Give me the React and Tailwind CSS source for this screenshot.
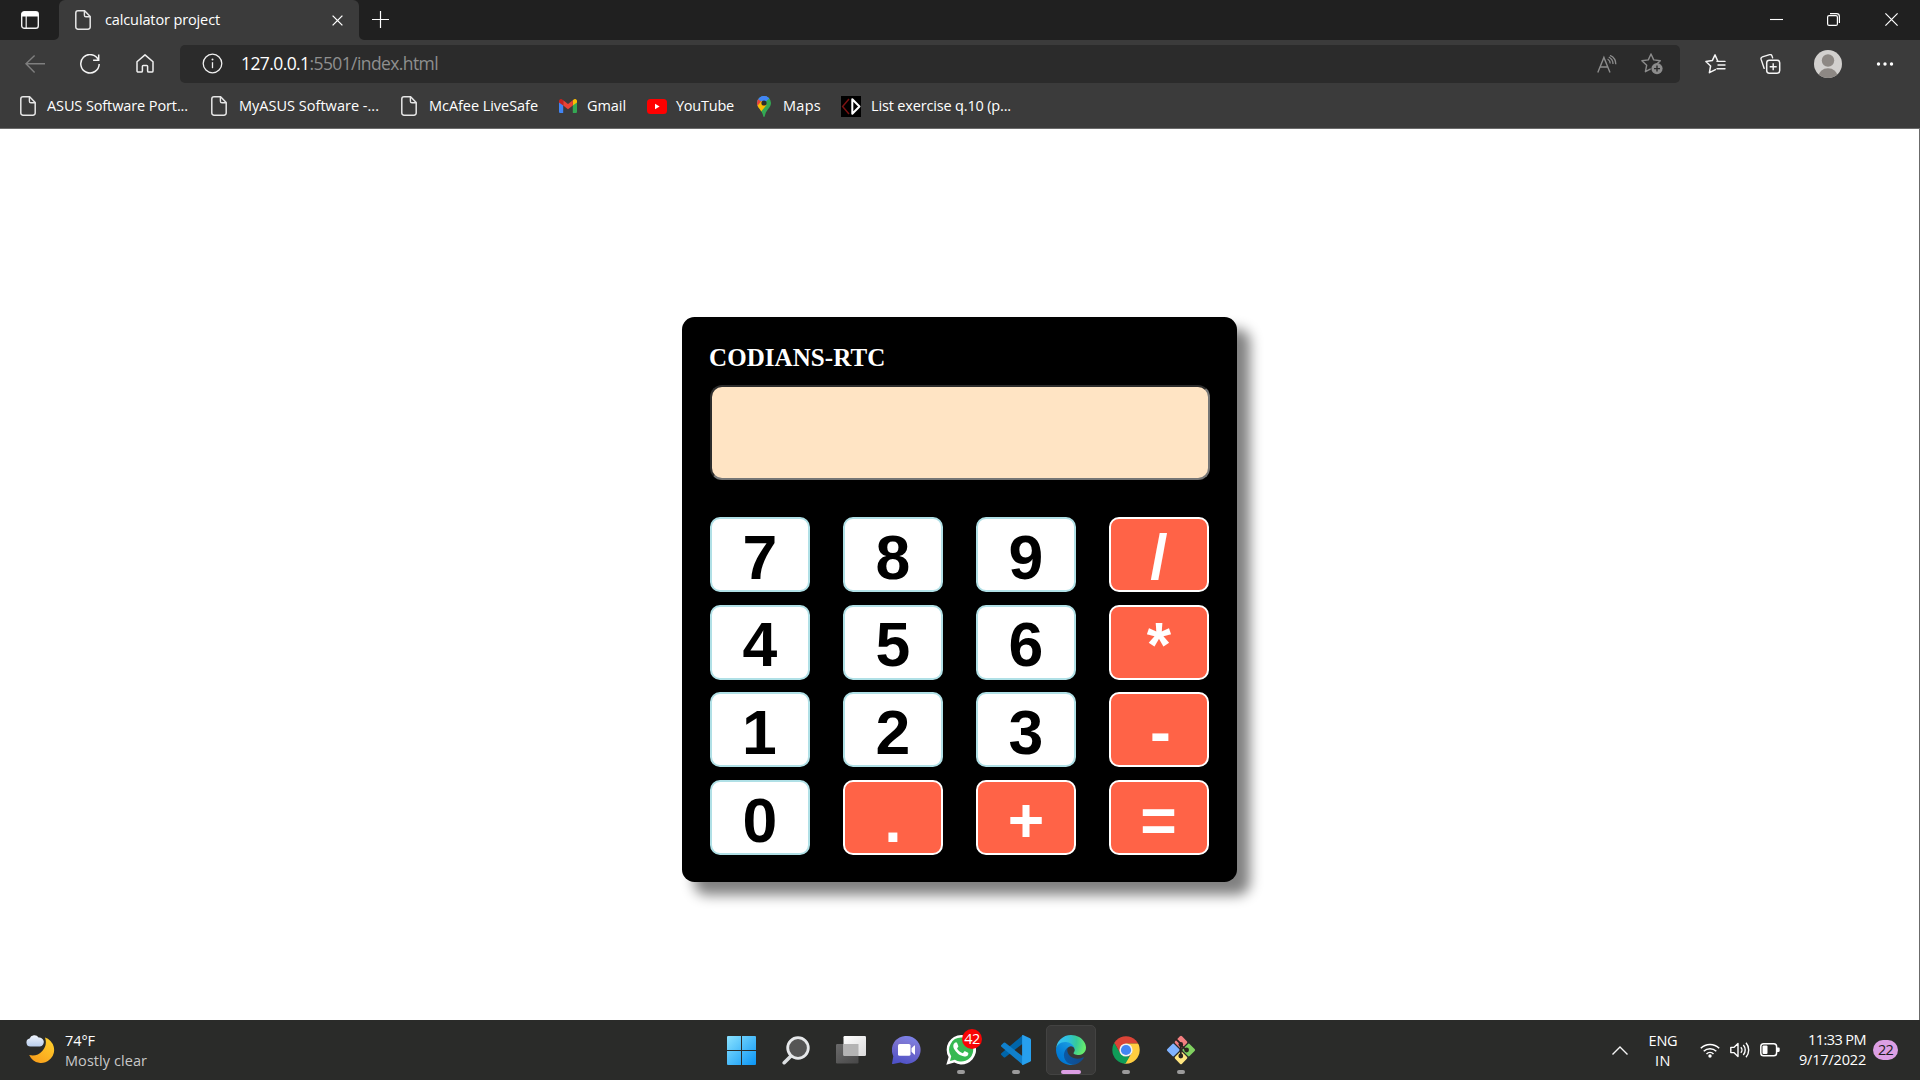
import { useLayoutEffect, useRef } from "react";

const UI = "font-['Open_Sans','Noto_Sans',sans-serif]";

/* Single line of text whose tracking is adjusted so it fills exactly `w` pixels. */
function Fit({ w, className = "", children }) {
  const ref = useRef(null);
  useLayoutEffect(() => {
    const el = ref.current;
    el.style.letterSpacing = "0px";
    const natural = el.getBoundingClientRect().width;
    const count = el.textContent.length;
    el.style.letterSpacing = `${(w - natural) / count}px`;
  }, [w]);
  return (
    <span ref={ref} className={`inline-block shrink-0 whitespace-pre ${className}`}>
      {children}
    </span>
  );
}

function Icon({ w, h, className = "", children }) {
  return (
    <svg
      width={w}
      height={h}
      viewBox={`0 0 ${w} ${h}`}
      fill="none"
      className={`block shrink-0 ${className}`}
    >
      {children}
    </svg>
  );
}

function PageIcon({ className = "" }) {
  return (
    <Icon w={16} h={20} className={className}>
      <path
        d="M3 .8h6.6L15.2 6.6V17a2.2 2.2 0 0 1-2.2 2.2H3A2.2 2.2 0 0 1 .8 17V3A2.2 2.2 0 0 1 3 .8Z"
        stroke="#e6e6e6"
        strokeWidth="1.5"
      />
      <path d="M9.4 1v4.2c0 .9.6 1.6 1.6 1.6h4" stroke="#e6e6e6" strokeWidth="1.4" />
    </Icon>
  );
}

function TitleBar() {
  return (
    <div className="flex h-10 bg-[#202020]">
      <div className="flex w-[59px] items-center pl-[21px]">
        <Icon w={18} h={18}>
          <rect x=".7" y=".7" width="16.6" height="16.6" rx="2.6" stroke="#f2f2f2" strokeWidth="1.4" />
          <path d="M.7 5.6V3.3A2.6 2.6 0 0 1 3.3.7h11.4a2.6 2.6 0 0 1 2.6 2.6v2.3Z" fill="#fff" />
          <path d="M5.2 5v12.3" stroke="#f2f2f2" strokeWidth="1.2" />
        </Icon>
      </div>
      <div className="relative flex w-[300px] items-center rounded-t-[6px] bg-[#3b3b3b] pl-4">
        <Icon w={5} h={5} className="absolute -left-[5px] bottom-0">
          <path d="M5 0v5H0a5 5 0 0 0 5-5Z" fill="#3b3b3b" />
        </Icon>
        <Icon w={5} h={5} className="absolute -right-[5px] bottom-0">
          <path d="M0 0v5h5a5 5 0 0 1-5-5Z" fill="#3b3b3b" />
        </Icon>
        <PageIcon />
        <Fit w={115} className="ml-[14px] text-[14.5px] leading-5 text-white">
          calculator project
        </Fit>
        <Icon w={11} h={11} className="absolute right-[16px] top-[15px]">
          <path d="M.6.6l9.8 9.8M10.4.6L.6 10.4" stroke="#fff" strokeWidth="1.3" />
        </Icon>
      </div>
      <Icon w={17} h={17} className="ml-[13px] mt-[11px]">
        <path d="M8.5 0v17M0 8.5h17" stroke="#fff" strokeWidth="1.2" />
      </Icon>
      <div className="ml-auto flex pr-[22px] pt-[13px]">
        <Icon w={13} h={13}>
          <path d="M0 6.5h13" stroke="#fff" strokeWidth="1.1" />
        </Icon>
        <Icon w={13} h={13} className="ml-11">
          <rect x=".6" y="2.6" width="9.8" height="9.8" rx="1.5" stroke="#fff" strokeWidth="1.2" />
          <path d="M3 .6h6.6a2.8 2.8 0 0 1 2.8 2.8V10" stroke="#fff" strokeWidth="1.2" />
        </Icon>
        <Icon w={13} h={13} className="ml-[45px]">
          <path d="M.4.4l12.2 12.2M12.6.4L.4 12.6" stroke="#fff" strokeWidth="1.2" />
        </Icon>
      </div>
    </div>
  );
}

function ToolBar() {
  return (
    <div className="flex h-[48px] items-center bg-[#3b3b3b] pb-px">
      <Icon w={20} h={18} className="ml-[25px]">
        <path d="M20 8.8H1M9.6.6L1 8.8l8.6 8.6" stroke="#7f7f7f" strokeWidth="1.4" />
      </Icon>
      <Icon w={20} h={20} className="ml-[35px]">
        <path d="M18.4 6A9.2 9.2 0 1 0 19.2 10" stroke="#f5f5f5" strokeWidth="1.5" />
        <path d="M18.7.6v5.6h-5.6" stroke="#f5f5f5" strokeWidth="1.5" />
      </Icon>
      <Icon w={18} h={19} className="ml-9">
        <path
          d="M1 7.8 9 .9l8 6.900v9.100a1.200 1.200 0 0 1-1.200 1.200h-3a1.200 1.200 0 0 1-1.200-1.200v-4.600a.9.900 0 0 0-.9-.9H7.300a.9.900 0 0 0-.9.900v4.600a1.200 1.200 0 0 1-1.200 1.200h-3A1.200 1.200 0 0 1 1 16.900Z"
          stroke="#f0f0f0"
          strokeWidth="1.5"
          strokeLinejoin="round"
        />
      </Icon>
      <div className="ml-[26px] flex h-[38px] w-[1500px] items-center rounded-[5px] bg-[#2b2b2b] pl-[22px]">
        <Icon w={21} h={21}>
          <circle cx="10.5" cy="10.5" r="9.3" stroke="#f0f0f0" strokeWidth="1.3" />
          <path d="M10.5 9.2v6" stroke="#f0f0f0" strokeWidth="1.3" />
          <circle cx="10.5" cy="6.4" r="1" fill="#f0f0f0" />
        </Icon>
        <Fit w={197} className="mb-px ml-[18px] text-[17.5px] leading-6 text-[#8f8f8f]">
          <span className="text-white">127.0.0.1</span>:5501/index.html
        </Fit>
        <Icon w={20} h={18} className="ml-auto">
          <path d="M.8 17.4 6.9 2.4l6.1 15M3.2 12h7.6" stroke="#8c8c8c" strokeWidth="1.4" />
          <path d="M10.6 4a5.500 5.500 0 0 1 2.600 4.600" stroke="#8c8c8c" strokeWidth="1.2" />
          <path d="M11.8 2a8 8 0 0 1 4.200 7" stroke="#8c8c8c" strokeWidth="1.3" />
          <path d="M13 .4a9.500 9.500 0 0 1 5.800 8.800" stroke="#8c8c8c" strokeWidth="1.3" />
        </Icon>
        <Icon w={22} h={22} className="ml-6 mr-[17px]">
          <path
            d="m10 1 2.7 5.9 6.6.8-3 2.8M10 1 7.3 6.900.9 7.700l4.800 4.500-1.300 6.500 4.800-2.600"
            stroke="#8c8c8c"
            strokeWidth="1.4"
            strokeLinejoin="round"
            strokeLinecap="round"
          />
          <circle cx="16" cy="15.6" r="5.6" fill="#8c8c8c" />
          <path d="M16 12.6v6M13 15.6h6" stroke="#2b2b2b" strokeWidth="1.4" />
        </Icon>
      </div>
      <Icon w={21} h={20} className="ml-[25px]">
        <path
          d="M12.6 6.800 10 .9 7.300 6.600.9 7.500l4.700 4.500-1.200 6.700 6-3.100"
          stroke="#f5f5f5"
          strokeWidth="1.5"
          strokeLinejoin="round"
          strokeLinecap="round"
        />
        <path d="M12 7.4h8M13 11h7M12 14.8h8" stroke="#f5f5f5" strokeWidth="1.4" strokeLinecap="round" />
      </Icon>
      <Icon w={21} h={20} className="ml-[34px]">
        <path
          d="M4.200 14.400 1.100 5.400a2 2 0 0 1 1.300-2.500L9.600.7a2 2 0 0 1 2.400 1.200l.6 2"
          stroke="#f5f5f5"
          strokeWidth="1.4"
          strokeLinecap="round"
        />
        <rect x="6.7" y="6.2" width="13" height="13" rx="2.6" stroke="#f5f5f5" strokeWidth="1.5" />
        <path d="M13.2 9.2v7M9.7 12.7h7" stroke="#f5f5f5" strokeWidth="1.4" />
      </Icon>
      <Icon w={28} h={28} className="ml-[33px]">
        <clipPath id="avatar">
          <circle cx="14" cy="14" r="14" />
        </clipPath>
        <g clipPath="url(#avatar)">
          <rect width="28" height="28" fill="#d2d0ce" />
          <circle cx="14" cy="10.5" r="6.2" fill="#8d8884" />
          <ellipse cx="14" cy="26.5" rx="9.6" ry="8.3" fill="#8d8884" />
        </g>
      </Icon>
      <Icon w={18} h={4} className="ml-[34px]">
        <circle cx="2.5" cy="2" r="1.7" fill="#fff" />
        <circle cx="9" cy="2" r="1.7" fill="#fff" />
        <circle cx="15.5" cy="2" r="1.7" fill="#fff" />
      </Icon>
    </div>
  );
}

function GmailIcon() {
  return (
    <Icon w={18} h={14}>
      <path d="M0 2v10.700c0 .7.600 1.300 1.300 1.300h2.900V5.200Z" fill="#4285f4" />
      <path d="M18 2v10.700c0 .7-.6 1.300-1.300 1.300h-2.900V5.200Z" fill="#34a853" />
      <path d="M13.800 1.300v5.300L18 3.500V2c0-1.700-1.900-2.600-3.200-1.600Z" fill="#fbbc04" />
      <path d="M4.200 6.600V1.300L9 4.900l4.800-3.600v5.300L9 10.200Z" fill="#ea4335" />
      <path d="M0 2v1.500l4.200 3.100V1.300L3.200.400C1.900-.6 0 .3 0 2Z" fill="#c5221f" />
    </Icon>
  );
}

function YouTubeIcon() {
  return (
    <Icon w={20} h={15}>
      <rect width="20" height="15" rx="3.5" fill="#f00" />
      <path d="M8 4.800v5.400l4.600-2.700Z" fill="#fff" />
    </Icon>
  );
}

function MapsIcon() {
  return (
    <Icon w={14} h={21}>
      <clipPath id="pin">
        <path d="M7 0a7 7 0 0 1 7 7c0 4.600-4.300 6.600-5.700 11.200C7.900 19.600 7.700 21 7 21s-.9-1.400-1.300-2.800C4.300 13.600 0 11.600 0 7a7 7 0 0 1 7-7Z" />
      </clipPath>
      <g clipPath="url(#pin)">
        <rect width="14" height="21" fill="#34a853" />
        <path d="M0 12 7 7l7-6V0H0Z" fill="#4285f4" />
        <path d="M0 2.200 7 8-2 15Z" fill="#ea4335" />
        <path d="M-1 11.500 5 4.500 9.500 9 3 17Z" fill="#fbbc04" />
        <path d="M2 2 7 7l5-6-5-2Z" fill="#4285f4" />
      </g>
      <circle cx="7" cy="7" r="2.6" fill="#2c2c2c" />
    </Icon>
  );
}

function CodeIcon() {
  return (
    <Icon w={20} h={21}>
      <rect width="20" height="21" fill="#000" />
      <path d="M8 3 1.600 10.500 8 18" stroke="#7a1212" strokeWidth="1.5" />
      <path d="M11.300 3.200v14.600l7.200-7.300Z" stroke="#fff" strokeWidth="2" strokeLinejoin="round" />
    </Icon>
  );
}

function Bookmark({ icon, label, w, gap, className }) {
  return (
    <div className={`flex items-center ${gap} ${className}`}>
      {icon}
      <Fit w={w} className="text-[14.5px] leading-5 text-white">
        {label}
      </Fit>
    </div>
  );
}

function BookmarkBar() {
  return (
    <div className="flex h-[41px] items-center border-b border-[#6b6b6b] bg-[#3b3b3b] pb-[4px]">
      <Bookmark className="ml-5" gap="gap-[11px]" icon={<PageIcon />} label="ASUS Software Port..." w={141} />
      <Bookmark className="ml-[23px]" gap="gap-3" icon={<PageIcon />} label="MyASUS Software -..." w={140} />
      <Bookmark className="ml-[22px]" gap="gap-3" icon={<PageIcon />} label="McAfee LiveSafe" w={109} />
      <Bookmark className="ml-[21px]" gap="gap-[10px]" icon={<GmailIcon />} label="Gmail" w={39} />
      <Bookmark className="ml-[21px]" gap="gap-[9px]" icon={<YouTubeIcon />} label="YouTube" w={58} />
      <Bookmark className="ml-[23px]" gap="gap-3" icon={<MapsIcon />} label="Maps" w={38} />
      <Bookmark className="ml-5" gap="gap-[10px]" icon={<CodeIcon />} label="List exercise q.10 (p..." w={140} />
    </div>
  );
}

const KEYS = ["7", "8", "9", "/", "4", "5", "6", "*", "1", "2", "3", "-", "0", ".", "+", "="];

function Key({ label }) {
  const tone = /\d/.test(label)
    ? "border-[#b0e0e6] bg-white text-black"
    : "border-white bg-[#ff6347] text-white";
  const nudge = label === "-" ? "pl-[3px]" : /[1=]/.test(label) ? "pr-px" : "";
  return (
    <button
      type="button"
      className={`flex h-[75px] w-[100px] items-center justify-center rounded-[10px] border-2 pt-[5px] font-['Liberation_Sans',Arial,sans-serif] text-[62.5px] font-bold leading-none ${tone} ${nudge}`}
    >
      {label}
    </button>
  );
}

function Calculator() {
  return (
    <div className="mt-[188px] h-[565px] w-[555px] rounded-[12.5px] bg-black px-[28px] pt-[26px] shadow-[12.5px_12.5px_12.5px_gray]">
      <h1 className="-ml-px font-['Liberation_Serif','Times_New_Roman',serif] text-[25px] font-bold leading-[29px] tracking-[0.08px] text-white">
        CODIANS-RTC
      </h1>
      <div className="mt-[13px] h-[95px] w-[500px] rounded-[12px] border-2 border-b-[#767676] border-l-[#2c2c2c] border-r-[#767676] border-t-[#2c2c2c] bg-[#ffe4c4]" />
      <div className="mt-[37px] grid grid-cols-[repeat(4,100px)] gap-x-[33px] gap-y-[12.66px]">
        {KEYS.map((k) => (
          <Key key={k} label={k} />
        ))}
      </div>
    </div>
  );
}

function WindowsIcon() {
  return (
    <Icon w={29} h={29}>
      <linearGradient id="win" x1="0" y1="0" x2="1" y2="1" gradientUnits="objectBoundingBox">
        <stop offset="0" stopColor="#8be3ff" />
        <stop offset="1" stopColor="#0a95f5" />
      </linearGradient>
      <path
        d="M1 0h13v14H0V1a1 1 0 0 1 1-1ZM15 0h13a1 1 0 0 1 1 1v13H15ZM0 15h14v14H1a1 1 0 0 1-1-1ZM15 15h14v13a1 1 0 0 1-1 1H15Z"
        fill="url(#win)"
      />
    </Icon>
  );
}

function SearchIcon() {
  return (
    <Icon w={28} h={29}>
      <path d="M9.500 19.500 2.200 26.700" stroke="#dcdfe1" strokeWidth="3.6" strokeLinecap="round" />
      <circle cx="16" cy="12" r="10.3" fill="#555" stroke="#e6e8ea" strokeWidth="2.8" />
    </Icon>
  );
}

function TaskViewIcon() {
  return (
    <Icon w={30} h={28}>
      <linearGradient id="tvFront" x1="0" y1="0" x2="1" y2="1">
        <stop offset="0" stopColor="#fff" />
        <stop offset="1" stopColor="#dadada" />
      </linearGradient>
      <linearGradient id="tvBack" x1="0" y1="0" x2="1" y2="1">
        <stop offset="0" stopColor="#6a6a6a" />
        <stop offset="1" stopColor="#474747" />
      </linearGradient>
      <rect y="8" width="22.5" height="19.5" rx="1.2" fill="url(#tvBack)" />
      <rect x="7.5" width="22.5" height="20" rx="1.2" fill="url(#tvFront)" />
      <path d="M7.500 8h15v12h-14a1 1 0 0 1-1-1Z" fill="#b4b4b4" />
    </Icon>
  );
}

function ChatIcon() {
  return (
    <Icon w={29} h={28}>
      <linearGradient id="chat" x1=".7" y1="0" x2=".4" y2="1">
        <stop offset="0" stopColor="#7b83eb" />
        <stop offset=".35" stopColor="#7a72cf" />
        <stop offset="1" stopColor="#4f52c8" />
      </linearGradient>
      <path d="M14.500 0a14 14 0 1 1-6 26.600L1 28a.8.8 0 0 1-.9-1l1.200-6.800A14 14 0 0 1 14.500 0Z" fill="url(#chat)" />
      <rect x="6" y="8" width="12.5" height="11.8" rx="1.6" fill="#fff" />
      <path d="m19.500 12.200 2.800-2.700a.4.400 0 0 1 .7.300v8.400a.4.400 0 0 1-.7.300l-2.800-2.700Z" fill="#fff" />
    </Icon>
  );
}

function WhatsAppIcon() {
  return (
    <Icon w={30} h={30}>
      <path
        d="M15.300 0A14.700 14.700 0 0 0 2.600 22L.3 29.800l8-2.200A14.700 14.700 0 1 0 15.300 0Z"
        fill="#fff"
      />
      <path
        d="M15.300 2.600A12 12 0 0 0 5.200 21.300L4 26.100l4.900-1.300A12 12 0 1 0 15.300 2.600Z"
        fill="#36b952"
      />
      <path
        d="M11.200 8.200c-.3-.6-.5-.6-.9-.6h-.7c-.3 0-.7.100-1 .5-.5.500-1.300 1.300-1.300 3.100s1.300 3.600 1.500 3.800c.2.300 2.600 4.100 6.400 5.600 3.100 1.200 3.800 1 4.400.9.700-.1 2.200-.9 2.500-1.800.3-.8.300-1.600.2-1.700-.1-.2-.3-.3-.7-.500l-2.500-1.200c-.4-.1-.6-.2-.9.200l-1.100 1.500c-.2.200-.4.300-.8.100-.4-.2-1.600-.6-3-1.800-1.100-1-1.900-2.200-2.100-2.600-.2-.4 0-.6.200-.8l.5-.6c.2-.2.200-.4.400-.6.100-.2 0-.4 0-.6Z"
        fill="#fff"
      />
    </Icon>
  );
}

function VSCodeIcon() {
  return (
    <Icon w={30} h={30}>
      <path d="M22 0v8.400L4.300 22.200a1.300 1.300 0 0 1-1.600 0L.4 20.100a1.200 1.200 0 0 1 0-1.800Z" fill="#0065a9" />
      <path d="M22 30v-8.400L4.300 7.800a1.300 1.300 0 0 0-1.600 0L.4 9.900a1.200 1.200 0 0 0 0 1.800Z" fill="#1080cc" />
      <path d="M22 0l7 3.200c.6.300 1 .9 1 1.600v20.400c0 .7-.4 1.300-1 1.600L22 30c-.6.200-.9-.2-.9-.7V.7c0-.5.300-.9.900-.7Z" fill="#27a0ee" />
    </Icon>
  );
}

function EdgeIcon() {
  return (
    <svg width="30" height="30" viewBox="0 0 256 256" className="block shrink-0">
      <defs>
        <linearGradient id="edgeA" x1="63" y1="177" x2="241" y2="177" gradientUnits="userSpaceOnUse">
          <stop offset="0" stopColor="#0c59a4" />
          <stop offset="1" stopColor="#114a8b" />
        </linearGradient>
        <linearGradient id="edgeB" x1="157" y1="100" x2="46" y2="220" gradientUnits="userSpaceOnUse">
          <stop offset="0" stopColor="#1b9de2" />
          <stop offset=".16" stopColor="#1595df" />
          <stop offset=".67" stopColor="#0680d7" />
          <stop offset="1" stopColor="#0078d4" />
        </linearGradient>
        <radialGradient id="edgeC" cx="26" cy="46" r="250" gradientUnits="userSpaceOnUse">
          <stop offset="0" stopColor="#35c1f1" />
          <stop offset=".3" stopColor="#2fc0e0" />
          <stop offset=".6" stopColor="#36c99a" />
          <stop offset=".9" stopColor="#66eb6e" />
        </radialGradient>
      </defs>
      <path
        d="M231 190.500c-3.400 1.800-6.900 3.400-10.500 4.700a101.800 101.800 0 0 1-35.900 6.400c-47.300 0-88.500-32.500-88.500-74.300 0-11.400 6.400-21.900 16.400-27.300-42.800 1.800-53.800 46.400-53.800 72.500 0 74 68.100 81.400 82.800 81.400 7.900 0 19.800-2.300 27-4.600l1.300-.4a128.300 128.300 0 0 0 66.600-52.800 4 4 0 0 0-5.400-5.600Z"
        fill="url(#edgeA)"
      />
      <path
        d="M105.700 241.400A79.200 79.200 0 0 1 83 220.100a80.700 80.700 0 0 1 29.500-120c3.200-1.500 8.500-4.100 15.600-4a32.400 32.400 0 0 1 25.700 13 31.900 31.900 0 0 1 6.300 18.700c0-.2 24.500-79.600-80-79.600-43.900 0-80 41.700-80 78.200a130.200 130.200 0 0 0 12.100 56 128 128 0 0 0 156.400 67.100 75.500 75.500 0 0 1-62.900-8.100Z"
        fill="url(#edgeB)"
      />
      <path
        d="M152.300 148.900c-.8 1-3.300 2.500-3.300 5.700 0 2.600 1.700 5.100 4.700 7.200 14.400 10 41.500 8.700 41.600 8.700 10.700 0 21.100-2.900 30.300-8.300A61.400 61.400 0 0 0 256 109.200c.3-22.400-8-37.300-11.300-43.900C223.500 23.900 177.700 0 128 0A128 128 0 0 0 0 126.200c.5-36.500 36.800-66 80-66 3.500 0 23.500.3 42 10.100 16.300 8.600 24.900 18.900 30.800 29.200 6.200 10.700 7.300 24.100 7.300 29.500 0 5.300-2.700 13.300-7.800 19.900Z"
        fill="url(#edgeC)"
      />
    </svg>
  );
}

function ChromeIcon() {
  return (
    <Icon w={28} h={28}>
      <clipPath id="chrome">
        <circle cx="14" cy="14" r="13.7" />
      </clipPath>
      <g clipPath="url(#chrome)">
        <path d="M14 14 2 7V0h26v7.500H14Z" fill="#db4437" />
        <path d="M14 7.500H28V28H12l7.700-10.800Z" fill="#ffcd40" />
        <path d="M2.200 6.500 8.300 17.300 14 20.500h3.600L13.300 28H0V8Z" fill="#0f9d58" />
        <path d="M2.200 6.500 14 7.500v7L8.300 17.300Z" fill="#db4437" />
      </g>
      <circle cx="14" cy="14" r="6.6" fill="#f1f1f1" />
      <circle cx="14" cy="14" r="5.1" fill="#4285f4" />
    </Icon>
  );
}

function GitIcon() {
  return (
    <Icon w={30} h={30}>
      <g transform="rotate(45 15 15)">
        <rect x="4.6" y="4.6" width="9.8" height="9.8" rx="1.5" fill="#f37f80" />
        <rect x="15.6" y="4.6" width="9.8" height="9.8" rx="1.5" fill="#80d060" />
        <rect x="4.6" y="15.6" width="9.8" height="9.8" rx="1.5" fill="#80b3ff" />
        <rect x="15.6" y="15.6" width="9.8" height="9.8" rx="1.5" fill="#ffe680" />
      </g>
      <path d="m9.800 3.800 5 5v12.700M14.800 9.800l5 5" stroke="#2c2320" strokeWidth="1.8" />
      <circle cx="14.8" cy="9.4" r="2.3" fill="#2c2320" />
      <circle cx="14.8" cy="21" r="2.4" fill="#2c2320" />
      <circle cx="20.6" cy="15" r="2.4" fill="#2c2320" />
    </Icon>
  );
}

const APPS = [
  { id: "start", icon: <WindowsIcon /> },
  { id: "search", icon: <SearchIcon /> },
  { id: "tasks", icon: <TaskViewIcon /> },
  { id: "chat", icon: <ChatIcon /> },
  { id: "whatsapp", icon: <WhatsAppIcon />, running: true, badge: "42" },
  { id: "vscode", icon: <VSCodeIcon />, running: true },
  { id: "edge", icon: <EdgeIcon />, active: true },
  { id: "chrome", icon: <ChromeIcon />, running: true },
  { id: "git", icon: <GitIcon />, running: true },
];

function TaskApp({ icon, running, active, badge }) {
  return (
    <div
      className={`relative flex h-[50px] w-[50px] items-center justify-center rounded-[5px] ${
        active ? "border border-[#434342] bg-[#383837]" : ""
      }`}
    >
      {icon}
      {running && <span className="absolute bottom-px left-[21px] h-1 w-2 rounded-full bg-[#9b9b9b]" />}
      {active && <span className="absolute bottom-0 left-[14px] h-1 w-5 rounded-full bg-[#dc9fe4]" />}
      {badge && (
        <span className="absolute left-[26px] top-[4px] flex h-5 w-5 items-center justify-center rounded-full bg-[#f80505] text-[14.5px] leading-none tracking-[-0.5px] text-white">
          {badge}
        </span>
      )}
    </div>
  );
}

function Taskbar() {
  return (
    <div className="flex h-[60px] items-center bg-[#2a2b29]">
      <div className="flex w-[714px] items-center pl-[25px]">
        <Icon w={30} h={30}>
          <linearGradient id="moon" x1="1" y1="0" x2=".3" y2="1">
            <stop offset="0" stopColor="#ffd42e" />
            <stop offset="1" stopColor="#f9a01b" />
          </linearGradient>
          <linearGradient id="cloud" x1="0" y1="0" x2="0" y2="1">
            <stop offset="0" stopColor="#f0f5fd" />
            <stop offset="1" stopColor="#b9cdec" />
          </linearGradient>
          <path d="M20 2.500a13 13 0 1 1-15.800 17.600A13.500 13.500 0 0 0 20 2.500Z" fill="url(#moon)" />
          <path d="M5.400 11.500A4 4 0 0 1 4.600 3.600a5 5 0 0 1 9-1A4.500 4.500 0 0 1 15 11.500Z" fill="url(#cloud)" />
        </Icon>
        <div className="ml-[10px] flex flex-col pt-[2px]">
          <Fit w={30} className="self-start text-[14.5px] leading-5 text-white">
            74°F
          </Fit>
          <Fit w={82} className="text-[14.5px] leading-5 text-[#c8c8c8]">
            Mostly clear
          </Fit>
        </div>
      </div>
      <div className="flex gap-[5px] pl-[2px]">
        {APPS.map(({ id, ...app }) => (
          <TaskApp key={id} {...app} />
        ))}
      </div>
      <div className="ml-auto flex items-center pr-[22px] text-white">
        <Icon w={16} h={9}>
          <path d="M.5 8.500 8 1l7.500 7.500" stroke="#f5f5f5" strokeWidth="1.4" />
        </Icon>
        <div className="ml-[20px] flex w-[30px] flex-col items-center pt-px">
          <Fit w={29} className="text-[14.5px] leading-5">ENG</Fit>
          <Fit w={16} className="text-[14.5px] leading-5">IN</Fit>
        </div>
        <Icon w={20} h={16} className="ml-[22px]">
          <path
            d="M.8 6.200a13 13 0 0 1 18.400 0M3.700 9.200a9 9 0 0 1 12.600 0M6.500 12a5 5 0 0 1 7 0"
            stroke="#fff"
            strokeWidth="1.5"
          />
          <circle cx="10" cy="14" r="1.7" fill="#fff" />
        </Icon>
        <Icon w={21} h={16} className="ml-[10px]">
          <path d="M.8 5.400h3L8 1.400v13.200l-4.200-4h-3Z" stroke="#fff" strokeWidth="1.4" strokeLinejoin="round" />
          <path
            d="M10.800 5.200a4 4 0 0 1 0 5.600M13.300 3a7.500 7.500 0 0 1 0 10M16 .800a11 11 0 0 1 0 14.400"
            stroke="#fff"
            strokeWidth="1.4"
          />
        </Icon>
        <Icon w={20} h={14} className="ml-[9px]">
          <rect x=".8" y=".8" width="15.8" height="12" rx="2.8" stroke="#fff" strokeWidth="1.5" />
          <rect x="2.5" y="2.5" width="5" height="8.6" rx="1" fill="#fff" />
          <path d="M17 4.600h1.500c.7 0 1.200.5 1.200 1.200v2c0 .7-.5 1.200-1.200 1.200H17Z" fill="#fff" />
        </Icon>
        <div className="ml-[18px] flex w-[68px] flex-col items-end">
          <Fit w={58} className="text-[14.5px] leading-5">11:33 PM</Fit>
          <Fit w={67} className="text-[14.5px] leading-5">9/17/2022</Fit>
        </div>
        <span className="ml-[7px] flex h-5 w-[25px] items-center justify-center rounded-full bg-[#dc9fe4] pt-px text-[14.5px] leading-none tracking-[-0.8px] text-[#1c1c1c]">
          22
        </span>
      </div>
    </div>
  );
}

export default function App() {
  return (
    <div className={`flex h-[1080px] w-[1920px] flex-col overflow-hidden ${UI}`}>
      <TitleBar />
      <ToolBar />
      <BookmarkBar />
      <main className="flex min-h-0 flex-1 items-start border-r border-[#6b6b6b] bg-white pl-[682px]">
        <Calculator />
      </main>
      <Taskbar />
    </div>
  );
}
